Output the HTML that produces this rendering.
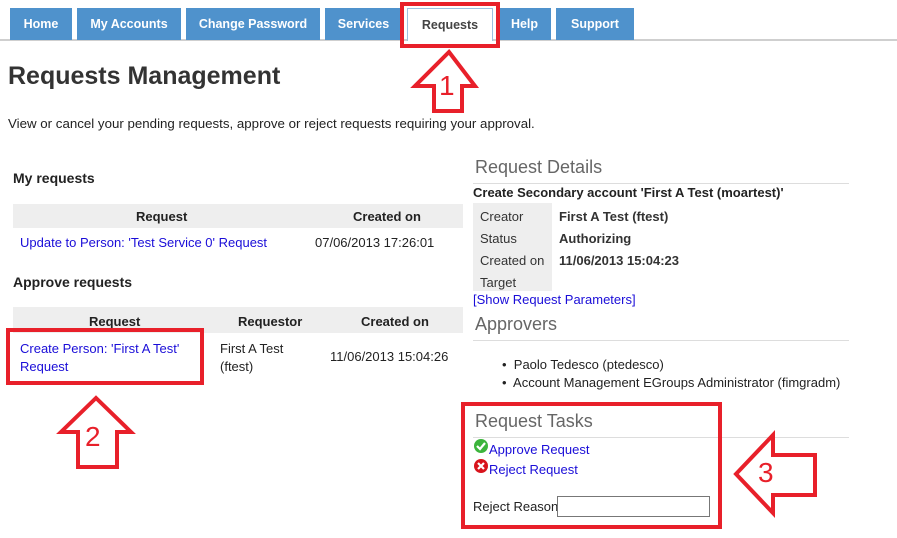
<!DOCTYPE html>
<html><head><meta charset="utf-8"><style>
*{margin:0;padding:0;box-sizing:border-box}
body{width:897px;height:538px;background:#fff;font-family:"Liberation Sans",sans-serif;font-size:13px;color:#222;position:relative;overflow:hidden}
.a{position:absolute;white-space:nowrap}
.tab{position:absolute;top:8px;height:32px;background:#4f92cc;color:#fff;font-weight:bold;font-size:12.5px;text-align:center;line-height:33px}
.b{font-weight:bold}
.lnk{color:#1a0dd8}
.h2{font-size:18px;color:#666}
.hl{position:absolute;height:1px;background:#ddd}
.red{position:absolute;border:4px solid #e8202a}
.num{position:absolute;color:#e8202a;font-size:28px;font-family:"Liberation Sans",sans-serif}
</style></head><body>
<div style="position:absolute;left:0;top:39px;width:897px;height:2px;background:#cfcfcf"></div>
<div class="tab" style="left:10px;width:62px">Home</div>
<div class="tab" style="left:77px;width:104px">My Accounts</div>
<div class="tab" style="left:186px;width:134px">Change Password</div>
<div class="tab" style="left:325px;width:77px">Services</div>
<div class="tab" style="left:407px;width:86px;background:#fff;color:#444;border:1px solid #9cc0e0;border-bottom:none;height:33px">Requests</div>
<div class="tab" style="left:498px;width:53px">Help</div>
<div class="tab" style="left:556px;width:78px">Support</div>
<div class="red" style="left:400px;top:2px;width:100px;height:46px"></div>

<div class="a b" style="left:8px;top:62px;font-size:25px;color:#333">Requests Management</div>
<div class="a" style="left:8px;top:116px;font-size:13.3px">View or cancel your pending requests, approve or reject requests requiring your approval.</div>

<div class="a b" style="left:13px;top:170px;font-size:14px">My requests</div>
<div style="position:absolute;left:13px;top:204px;width:450px;height:24px;background:#eee"></div>
<div class="a b" style="left:136px;top:209px">Request</div>
<div class="a b" style="left:353px;top:209px">Created on</div>
<div class="a lnk" style="left:20px;top:235px">Update to Person: 'Test Service 0' Request</div>
<div class="a" style="left:315px;top:235px">07/06/2013 17:26:01</div>

<div class="a b" style="left:13px;top:274px;font-size:14px">Approve requests</div>
<div style="position:absolute;left:13px;top:307px;width:450px;height:26px;background:#eee"></div>
<div class="a b" style="left:89px;top:314px">Request</div>
<div class="a b" style="left:238px;top:314px">Requestor</div>
<div class="a b" style="left:361px;top:314px">Created on</div>
<div class="a lnk" style="left:20px;top:340px;line-height:18px;white-space:normal;width:180px">Create Person: 'First A Test' Request</div>
<div class="a" style="left:220px;top:340px;line-height:18px">First A Test<br>(ftest)</div>
<div class="a" style="left:330px;top:349px">11/06/2013 15:04:26</div>
<div class="red" style="left:6px;top:328px;width:198px;height:57px"></div>

<div class="a h2" style="left:475px;top:157px">Request Details</div>
<div class="hl" style="left:473px;top:183px;width:376px"></div>
<div class="a b" style="left:473px;top:185px">Create Secondary account 'First A Test (moartest)'</div>
<div style="position:absolute;left:473px;top:203px;width:79px;height:88px;background:#eee"></div>
<div class="a" style="left:480px;top:206px;line-height:22px;color:#333">Creator<br>Status<br>Created on<br>Target</div>
<div class="a b" style="left:559px;top:206px;line-height:22px;color:#333">First A Test (ftest)<br>Authorizing<br>11/06/2013 15:04:23</div>
<div class="a lnk" style="left:473px;top:292px">[Show Request Parameters]</div>
<div class="a h2" style="left:475px;top:314px">Approvers</div>
<div class="hl" style="left:473px;top:340px;width:376px"></div>
<div class="a" style="left:502px;top:356px;line-height:18px">•&nbsp; Paolo Tedesco (ptedesco)<br>•&nbsp; Account Management EGroups Administrator (fimgradm)</div>

<div class="a h2" style="left:475px;top:411px">Request Tasks</div>
<div class="hl" style="left:473px;top:437px;width:376px"></div>
<svg class="a" style="left:473px;top:438px" width="16" height="16"><circle cx="8" cy="8" r="7" fill="#3cb43c"/><path d="M4 8l3 3 5-6" stroke="#fff" stroke-width="2.2" fill="none"/></svg>
<div class="a lnk" style="left:489px;top:442px">Approve Request</div>
<svg class="a" style="left:473px;top:458px" width="16" height="16"><circle cx="8" cy="8" r="7" fill="#d8141c"/><path d="M5 5l6 6M11 5l-6 6" stroke="#fff" stroke-width="2.2"/></svg>
<div class="a lnk" style="left:489px;top:462px">Reject Request</div>
<div class="a" style="left:473px;top:499px">Reject Reason</div>
<div style="position:absolute;left:557px;top:496px;width:153px;height:21px;border:1px solid #777"></div>
<div class="red" style="left:461px;top:402px;width:261px;height:127px"></div>

<svg class="a" style="left:0;top:0" width="897" height="538">
<polygon points="449,52 475,86 462,86 462,111 434,111 434,86 415,86" fill="#fff" stroke="#e8202a" stroke-width="4" stroke-linejoin="miter"/>
<polygon points="96,398 131,432 117,432 117,467 78,467 78,432 61,432" fill="#fff" stroke="#e8202a" stroke-width="4"/>
<polygon points="736,474 773,435 773,455 815,455 815,495 773,495 773,513" fill="#fff" stroke="#e8202a" stroke-width="4"/>
</svg>
<div class="num" style="left:439px;top:70px">1</div>
<div class="num" style="left:85px;top:421px">2</div>
<div class="num" style="left:758px;top:457px">3</div>
</body></html>
